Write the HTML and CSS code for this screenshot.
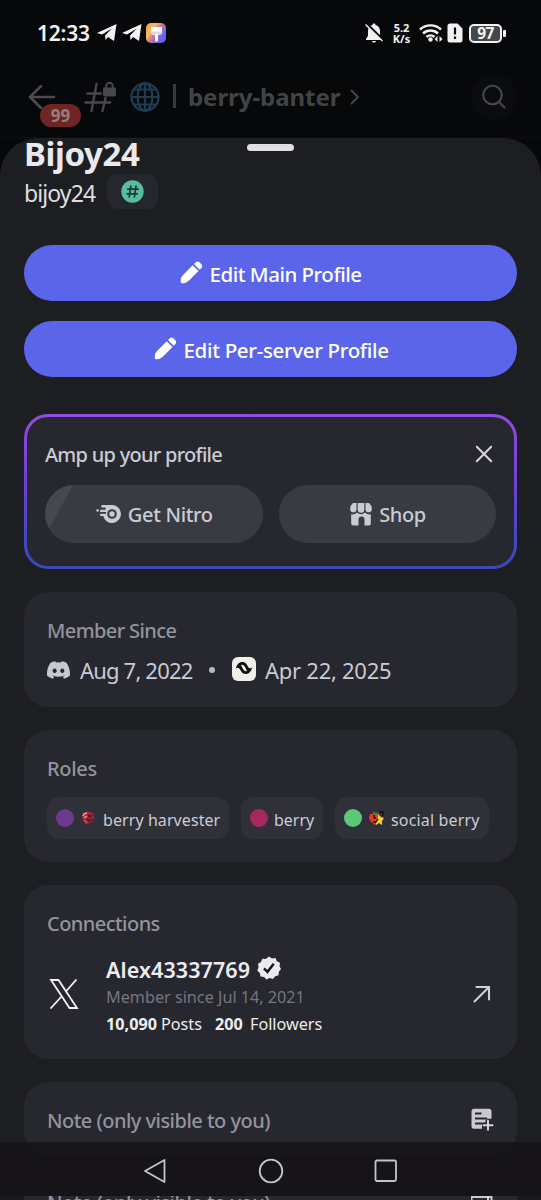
FILE: index.html
```html
<!DOCTYPE html>
<html lang="en">
<head>
<meta charset="utf-8">
<title>Profile</title>
<link rel="stylesheet" href="styles.css">
</head>
<body>
<div class="phone">
  <div class="status">
    <span class="clock">12:33</span>
    <svg class="tg" width="20" height="18" viewBox="0 0 20 18"><path d="M0 9 19.5 0 17 17 11 13 8.500 16 8 11.500 15 4.500 5 10.500Z" fill="#f2f2f4"/></svg>
    <svg class="tg" width="20" height="18" viewBox="0 0 20 18"><path d="M0 9 19.5 0 17 17 11 13 8.500 16 8 11.500 15 4.500 5 10.500Z" fill="#f2f2f4"/></svg>
    <span class="paint"><svg width="20" height="20" viewBox="0 0 20 20"><path d="M5 4h11v7l-4 1v5a1.500 1.500 0 0 1-3 0v-5l-4-1z" fill="#fff"/><path d="M5 8.500h11V11H5z" fill="#ded7ee"/></svg></span>
    <span class="grow"></span>
    <svg class="bell" width="18" height="20" viewBox="0 0 18 20"><path d="M9 .5c1 0 1.500.6 1.500 1.500 3 .8 4.500 3 4.500 6v5l2 3v1H1v-1l2-3V8c0-3 1.500-5.200 4.500-6C7.500 1.100 8 .5 9 .5zM7 18h4c-.4 2-3.600 2-4 0z" fill="#f2f2f4"/><path d="M1.500 1 18 17" stroke="#07080a" stroke-width="3"/><path d="M.5 1.500 17.500 18" stroke="#f2f2f4" stroke-width="1.400"/></svg>
    <span class="speed"><b>5.2</b><b>K/s</b></span>
    <svg class="wifi" width="24" height="20" viewBox="0 0 24 20"><g fill="none" stroke="#f2f2f4" stroke-width="2.400"><path d="M1 6.500a15.500 15.500 0 0 1 21 0"/><path d="M4 10.500a11 11 0 0 1 15 0"/><path d="M7.500 14a6 6 0 0 1 8 0"/></g><circle cx="11.500" cy="16.500" r="2.200" fill="#f2f2f4"/><path d="M18.500 13v6L15.500 16zM20.500 13v6L23.500 16z" fill="#f2f2f4"/></svg>
    <svg class="sim" width="16" height="20" viewBox="0 0 16 20"><path d="M3 .5h7.500l5 5V17a2.500 2.500 0 0 1-2.500 2.500H3A2.500 2.500 0 0 1 .5 17V3A2.500 2.500 0 0 1 3 .5z" fill="#f2f2f4"/><path d="M8 4.500v7M8 13.500v2.500" stroke="#07080a" stroke-width="2.200"/></svg>
    <span class="battery">97</span><span class="tip"></span>
  </div>

  <div class="header">
    <svg class="back" width="28" height="24" viewBox="0 0 28 24"><path d="M13 1 2 12l11 11M2 12h24" fill="none" stroke="#4b4c4f" stroke-width="2.600" stroke-linecap="round" stroke-linejoin="round"/></svg>
    <svg class="hash" width="32" height="32" viewBox="0 0 32 32"><g fill="none" stroke="#47484b" stroke-width="2.400" stroke-linecap="round"><path d="M12.500 3 7.500 30M21.500 17 18.500 30M3.500 12.500H17M1.500 21.500H26"/></g><path d="M20 6.500h11a1 1 0 0 1 1 1v6a2 2 0 0 1-2 2H21a2 2 0 0 1-2-2v-6a1 1 0 0 1 1-1z" fill="#47484b"/><path d="M22.300 7V5a3.200 3.200 0 0 1 6.400 0v2" fill="none" stroke="#47484b" stroke-width="2"/></svg>
    <svg class="globe" width="30" height="30" viewBox="0 0 30 30"><g fill="none" stroke="#1d3d57" stroke-width="2.200"><circle cx="15" cy="15" r="13.600"/><ellipse cx="15" cy="15" rx="7.400" ry="13.600"/><path d="M15 1.500v27M1.500 15h27M4 7.500h22M4 22.500h22"/></g></svg>
    <span class="bar"></span>
    <span class="channel">berry-banter</span>
    <svg class="chev" width="10" height="16" viewBox="0 0 10 16"><path d="m1.500 1.500 6.500 6.500-6.500 6.500" fill="none" stroke="#47484b" stroke-width="1.800" stroke-linecap="round" stroke-linejoin="round"/></svg>
    <span class="grow"></span>
    <span class="search"><svg width="26" height="26" viewBox="0 0 26 26"><g fill="none" stroke="#47484b" stroke-width="2.100" stroke-linecap="round"><circle cx="11.500" cy="11" r="9.300"/><path d="m18 18 5.500 5.500"/></g></svg></span>
    <span class="badge">99</span>
  </div>

  <main class="sheet">
    <span class="handle"></span>
    <h1 class="name">Bijoy24</h1>
    <div class="userline"><span class="user">bijoy24</span><span class="tag"><svg width="23" height="23" viewBox="0 0 23 23"><circle cx="11.500" cy="11.500" r="11.200" fill="#58bd9c"/><path d="M9.800 6 8.200 17M15 6l-1.600 11M6.800 9.200h10.200M6 13.800h10.200" stroke="#1f3834" stroke-width="1.700" stroke-linecap="round"/></svg></span></div>

    <button class="primary"><svg width="23" height="23" viewBox="0 0 23 23"><path d="M12.700 4.300 18.500 10.100 9 19.500Q6 22.300 2.500 22.300H2Q.6 22.300.8 20.500V19q0-2.500 2-4.700zM14 3.100l1.800-1.800q1.800-1.500 3.600 0l2 2q1.500 1.800 0 3.600l-1.700 1.800z" fill="#fff"/></svg><span class="t-main">Edit Main Profile</span></button>
    <button class="primary"><svg width="23" height="23" viewBox="0 0 23 23"><path d="M12.700 4.300 18.500 10.100 9 19.500Q6 22.300 2.500 22.300H2Q.6 22.300.8 20.500V19q0-2.500 2-4.700zM14 3.100l1.800-1.800q1.800-1.500 3.600 0l2 2q1.500 1.800 0 3.600l-1.700 1.800z" fill="#fff"/></svg><span class="t-server">Edit Per-server Profile</span></button>

    <section class="amp">
      <div class="amp-head"><span class="t-amp">Amp up your profile</span><svg width="18" height="18" viewBox="0 0 18 18"><path d="m1.800 1.800 14.400 14.400M16.200 1.800 1.800 16.200" stroke="#d6d6dc" stroke-width="2" stroke-linecap="round"/></svg></div>
      <div class="amp-row">
        <button class="secondary shine"><svg width="25" height="20" viewBox="0 0 25 20"><path d="M6.500 1H16a9 9 0 1 1-8.800 11H5a1.100 1.100 0 0 1 0-2.200h5V8H5a1.100 1.100 0 0 1 0-2.200h4.500V3.600h-3a1.300 1.300 0 0 1 0-2.600z" fill="#cbcbd3"/><circle cx="16" cy="10" r="4.800" fill="#393b43"/><circle cx="16" cy="10" r="2.700" fill="#cbcbd3"/><circle cx="1.600" cy="6.500" r="1.300" fill="#cbcbd3"/></svg><span class="t-nitro">Get Nitro</span></button>
        <button class="secondary"><svg width="22" height="23" viewBox="0 0 22 23"><g fill="#cbcbd3"><path d="M3 0h3.500v6.200a3 3 0 0 1-6.300 0Q0 2.500 3 0zM7.700 0h6.600v6.500a3.300 3.300 0 0 1-6.600 0zM15.500 0H19q3 2.500 2.800 6.200a3 3 0 0 1-6.300 0z"/><path d="M1.200 11.300q3.500.6 5.800-1.800 4 3.600 8 0 2.300 2.400 5.800 1.800V20.500a2 2 0 0 1-2 2h-4.300v-6a3 3 0 0 0-6 0v6H3.200a2 2 0 0 1-2-2z"/></g></svg><span class="t-shop">Shop</span></button>
      </div>
    </section>

    <section class="card member">
      <h2 class="t-member">Member Since</h2>
      <div class="dates">
        <svg width="23" height="18" viewBox="0 0 127.140 96.360"><path fill="#c8c8d0" d="M107.700 8.070A105.150 105.150 0 0 0 81.470 0a72.060 72.060 0 0 0-3.360 6.830 97.680 97.680 0 0 0-29.110 0A72.370 72.370 0 0 0 45.640 0a105.890 105.890 0 0 0-26.250 8.090C2.790 32.650-1.710 56.600.54 80.210a105.730 105.730 0 0 0 32.170 16.150 77.700 77.700 0 0 0 6.890-11.110 68.420 68.420 0 0 1-10.850-5.180c.91-.66 1.800-1.340 2.660-2a75.570 75.570 0 0 0 64.320 0c.87.71 1.760 1.390 2.660 2a68.680 68.680 0 0 1-10.870 5.190 77 77 0 0 0 6.890 11.100 105.250 105.250 0 0 0 32.190-16.140c2.640-27.380-4.510-51.110-18.900-72.150zM42.450 65.690C36.180 65.690 31 60 31 53s5-12.740 11.430-12.740S54 46 53.890 53s-5.050 12.690-11.440 12.690zm42.240 0C78.410 65.690 73.250 60 73.250 53s5-12.740 11.440-12.740S96.230 46 96.120 53s-5.040 12.690-11.430 12.690z"/></svg>
        <span class="t-aug">Aug 7, 2022</span><span class="dot"></span>
        <span class="server"><svg width="18" height="14" viewBox="0 0 18 14"><path d="M.8 7.500C2 3 4.500 1 7 1c3.500 0 4.500 2 5.800 4.200C14 7.500 15.500 7.800 17.200 6.500 16 11 13.500 13 11 13c-3.500 0-4.500-2-5.800-4.200C4 6.500 2.500 6.200.8 7.500z" fill="#121212"/><path d="M7 3.800c1.500 0 2.300 1 3 2.200l1.700 3.200c.4.700 0 1-.7 1-1.500 0-2.300-1-3-2.200L6.300 4.800c-.4-.7 0-1 .7-1z" fill="#f1efea"/></svg></span>
        <span class="t-apr">Apr 22, 2025</span>
      </div>
    </section>

    <section class="card roles">
      <h2 class="t-roles">Roles</h2>
      <div class="chips">
        <span class="chip c1"><i class="violet"></i><svg width="14" height="14" viewBox="0 0 14 14"><path d="M2 2Q7-1 12 2q3 4-1 8-3 4-6 3Q-1 8 2 2z" fill="#9d2638"/><path d="M2 5q1-3 4-3M3 7l3-2" fill="none" stroke="#dfa0a8" stroke-width="1.500"/><path d="m7 4 2 2 2-2M6 8l2 2 3-2" stroke="#421821" stroke-width="1.500" fill="none"/><path d="M3 9l3 3" stroke="#d54455" stroke-width="1.500"/></svg><span class="t-harv">berry harvester</span></span>
        <span class="chip c2"><i class="pink"></i><span class="t-berry">berry</span></span>
        <span class="chip c3"><i class="green"></i><svg width="15" height="15" viewBox="0 0 15 15"><path d="M1 3h9v9l-4 2-4-3-2-4z" fill="#df3c32"/><path d="M9 3 12 6l3 1-2 3v4l-3-2-3 2V10l2-2z" fill="#f3ce38"/><path d="m4 0 3 2 3-1-2 3H4z" fill="#42813b"/><path d="M10 1h4v4M5 4v3h2M4 11h3l2-3" stroke="#180e0e" stroke-width="1.300" fill="none"/></svg><span class="t-social">social berry</span></span>
      </div>
    </section>

    <section class="card conns">
      <h2 class="t-conn">Connections</h2>
      <div class="conn">
        <svg class="x" width="30" height="30" viewBox="0 0 30 30"><g fill="none" stroke="#f2f2f4" stroke-width="1.800"><path d="M2 1h7.500L28 29h-7.500zM27.500.5 16.500 13M13 17 1.500 29.500"/></g></svg>
        <div class="info">
          <div class="handle-row"><span class="t-alex">Alex43337769</span><svg width="24" height="24" viewBox="0 0 24 24"><path d="m12 .5 3 2 3.500-.5 1.300 3.300 3.200 1.500-.5 3.500L24 13l-2.200 2.800-.2 3.500-3.400.9-2.200 2.800-3.400-.9L9.500 23.500 7 21l-3.500-.5-.7-3.400L.3 14.500l1.300-3.200-.6-3.500L4 6l1.300-3.300 3.500.3z" fill="#ebebef"/><path d="m7 12.500 3.500 3.300 6.200-8" fill="none" stroke="#17171b" stroke-width="2.500"/></svg></div>
          <div class="since"><span class="t-since">Member since Jul 14, 2021</span></div>
          <div class="stats"><b class="t-n1">10,090</b><span class="t-posts">Posts</span><b class="t-n2">200</b><span class="t-fol">Followers</span></div>
        </div>
        <svg class="go" width="18" height="18" viewBox="0 0 18 18"><path d="M3.500 2H16v12.500M16 2 1.500 16.500" fill="none" stroke="#d0d0d7" stroke-width="2.100" stroke-linecap="round"/></svg>
      </div>
    </section>

    <section class="card note">
      <h2 class="t-note">Note (only visible to you)</h2>
      <svg width="23" height="23" viewBox="0 0 23 23"><path d="M3 .8h15a2.500 2.500 0 0 1 2.500 2.500v7.500h-5v4H11v6H3A2.500 2.500 0 0 1 .5 18.300v-15A2.500 2.500 0 0 1 3 .8z" fill="#c9c8d3"/><path d="M4 5.500h6.500M4 10.500h12M4 15.500h7" stroke="#27272f" stroke-width="2"/><path d="M17 12v10M12 17h10" stroke="#27272f" stroke-width="5"/><path d="M17 12.700v9M12.500 17.200h9" stroke="#d5d4de" stroke-width="2" stroke-linecap="round"/></svg>
    </section>
  </main>

  <nav class="nav">
    <div class="keys">
      <svg width="24" height="26" viewBox="0 0 24 26"><path d="M21.500 2v22L2 13z" fill="none" stroke="#c5c4c8" stroke-width="1.800" stroke-linejoin="round"/></svg>
      <svg width="26" height="26" viewBox="0 0 26 26"><circle cx="13" cy="13" r="11.300" fill="none" stroke="#c5c4c8" stroke-width="1.800"/></svg>
      <svg width="24" height="24" viewBox="0 0 24 24"><rect x="1.500" y="1.500" width="20.500" height="20.500" rx="1.500" fill="none" stroke="#c5c4c8" stroke-width="1.800"/></svg>
    </div>
    <div class="echo"><div class="echo-card"><span class="t-note">Note (only visible to you)</span><svg width="23" height="23" viewBox="0 0 23 23"><path d="M.5 6V1h20v5" fill="none" stroke="#c9c8d3" stroke-width="2"/><path d="M17 0v5" stroke="#d5d4de" stroke-width="2"/></svg></div></div>
  </nav>
</div>
</body>
</html>
```
FILE: styles.css
```css
* { box-sizing: border-box; }
body { margin: 0; background: #07080a; font-family: "Noto Sans", "Open Sans", sans-serif; color: #cbcbd3; }
h1, h2 { margin: 0; }
svg { flex: none; display: block; }
span, b { white-space: nowrap; }
button { border: 0; padding: 0; font: inherit; color: inherit; }
.phone { position: relative; width: 541px; height: 1200px; overflow: hidden; display: flex; flex-direction: column; }
.grow { flex: 1; }

.status { height: 66px; flex: none; display: flex; align-items: center; padding: 0 35px 0 37px; color: #f2f2f4; }
.clock { width: 60px; font-size: 21px; font-weight: 600; letter-spacing: -.2px; }
.tg { margin-right: 5px; }
.tg + .tg { margin-right: 4px; }
.paint { width: 20px; height: 20px; border-radius: 5px; background: linear-gradient(125deg, #f5a052 10%, #f4bd62 30%, #d27199 50%, #626bef 75%, #6f50d8); }
.bell { margin: 0 8px 0 -1px; }
.speed { width: 21px; margin-right: 7px; display: flex; flex-direction: column; align-items: center; font-size: 11px; line-height: 11px; }
.wifi { margin-right: 4px; }
.sim { margin-right: 6px; }
.battery { width: 33px; height: 19px; border: 2px solid #f2f2f4; border-radius: 5px; background: #46474a; font-size: 15.5px; font-weight: 700; line-height: 15px; text-align: center; letter-spacing: -.5px; }
.tip { width: 3px; height: 7px; margin-left: 1px; border-radius: 1px; background: #f2f2f4; }

.header { position: relative; height: 72px; flex: none; display: flex; align-items: center; padding: 0 24px 10px 28px; border-bottom: 1px solid #0c0d0f; }
.back { margin-right: 28px; }
.hash { margin-right: 14px; }
.globe { margin-right: 13px; }
.bar { width: 3px; height: 24px; margin: -2px 12px 0 0; background: #38393c; }
.channel { width: 162px; margin-top: 1px; font-size: 24px; font-weight: 700; line-height: 30px; color: #424346; letter-spacing: -.05px; }
.search { width: 46px; height: 46px; border-radius: 50%; background: #0b0c0e; display: flex; align-items: center; justify-content: center; }
.badge { position: absolute; left: 40px; top: 38px; width: 41px; height: 23px; border-radius: 12px; background: #6e2524; color: #8f8080; font-size: 17px; font-weight: 700; line-height: 23px; text-align: center; }

.sheet { position: relative; flex: none; height: 1062px; background: #1d1e22; border-radius: 38px 38px 0 0; padding: 0 24px; display: flex; flex-direction: column; }
.handle { position: absolute; left: 247px; top: 6px; width: 47px; height: 7px; border-radius: 4px; background: #dfdfe4; }
.name { height: 34px; line-height: 31px; font-size: 33px; font-weight: 700; color: #e9e9ee; letter-spacing: -.4px; }
.userline { height: 42px; display: flex; align-items: center; margin-bottom: 31px; }
.user { width: 83px; font-size: 23px; line-height: 30px; color: #dedee3; letter-spacing: -.9px; }
.tag { width: 51px; height: 35px; border-radius: 11px; background: #26272e; display: flex; align-items: center; justify-content: center; margin-top: -4px; }
.primary { flex: none; height: 56px; border-radius: 28px; background: #5b65e9; color: #fff; display: flex; align-items: center; justify-content: center; gap: 7px; font-size: 20.5px; font-weight: 500; line-height: 28px; margin-bottom: 20px; }
.primary svg { margin-top: -1px; }
.primary span { margin-top: 1px; text-align: left; }
.t-main { width: 152px; letter-spacing: -.5px; }
.t-server { width: 204px; letter-spacing: -.33px; }

.amp { flex: none; height: 155px; margin-top: 17px; border: 3px solid transparent; border-radius: 24px; background: linear-gradient(#27272f, #27272f) padding-box, linear-gradient(#904ee0, #783fdc 35%, #4a45cc 75%, #3948b7) border-box; padding: 23px 18px 0; }
.amp-head { display: flex; justify-content: space-between; align-items: center; height: 30px; padding-right: 3px; font-size: 20px; font-weight: 500; line-height: 30px; margin-bottom: 15px; }
.amp-head svg { margin-top: -3px; }
.t-amp { letter-spacing: -.73px; }
.amp-row { display: flex; gap: 16px; }
.secondary { flex: 1; height: 58px; border-radius: 29px; background: #393b43; display: flex; align-items: center; justify-content: center; gap: 7px; font-size: 20px; font-weight: 500; line-height: 28px; }
.secondary span { margin-top: 2px; text-align: left; }
.shine { background: linear-gradient(119deg, #454850 0 24px, #393b43 25px); }
.t-nitro { width: 84px; letter-spacing: -.3px; }
.t-shop { width: 45px; letter-spacing: -.4px; }

.card { flex: none; border-radius: 24px; background: #27272f; padding: 24px 23px 0; }
h2 { font-size: 20px; font-weight: 500; line-height: 30px; color: #93939d; white-space: nowrap; }
.t-member { letter-spacing: -.6px; }
.t-roles { letter-spacing: -.3px; }
.t-conn { letter-spacing: -.55px; }
.t-note { letter-spacing: -.52px; }
.member { height: 115px; margin-top: 23px; }
.dates { display: flex; align-items: center; height: 30px; margin-top: 9px; font-size: 22px; line-height: 30px; }
.dates svg { margin-top: -1px; }
.t-aug { width: 113px; margin-left: 10px; letter-spacing: -.82px; }
.dot { width: 6px; height: 6px; border-radius: 50%; background: #b9b9c2; margin: 0 17px 0 16px; }
.server { width: 24px; height: 24px; border-radius: 6px; background: #f1efea; display: flex; align-items: center; justify-content: center; margin: -3px 9px 0 0; }
.t-apr { letter-spacing: -.27px; }

.roles { height: 132px; margin-top: 23px; }
.chips { display: flex; gap: 12px; margin-top: 13px; }
.chip { height: 42px; border-radius: 12px; background: #2f3038; display: flex; align-items: center; font-size: 16px; line-height: 24px; padding-left: 9px; }
.chip i { width: 18px; height: 18px; border-radius: 50%; flex: none; }
.chip svg { margin-left: 7px; }
.chip > span { margin: 4px 0 0 6px; }
.violet { background: #6e3a8c; }
.pink { background: #a52860; }
.green { background: #5cc878; }
.c1 { width: 182px; }
.c2 { width: 82px; }
.c3 { width: 154px; }
.chip .t-harv { margin-left: 8px; letter-spacing: .08px; }
.chip .t-social { margin-left: 7px; letter-spacing: .15px; }

.conns { height: 174px; margin-top: 23px; }
.conn { display: flex; align-items: center; height: 84px; margin-top: 14px; }
.x { margin: -3px 27px 0 2px; }
.info { flex: 1; }
.handle-row { display: flex; align-items: center; height: 31px; font-size: 21.5px; font-weight: 600; line-height: 31px; color: #ededf1; }
.handle-row svg { margin-top: -3px; }
.t-alex { width: 151px; letter-spacing: .08px; }
.since { height: 25px; font-size: 16.2px; line-height: 24px; color: #767680; }
.stats { display: flex; height: 27px; font-size: 16.2px; line-height: 28px; color: #ededf1; }
.t-n1 { width: 55px; }
.t-posts { width: 54px; }
.t-n2 { width: 35px; }
.go { margin: -2px 3px 0 0; }

.note { height: 73px; margin-top: 23px; display: flex; justify-content: space-between; }
.note svg { margin-top: 2px; }

.nav { position: absolute; left: 0; right: 0; bottom: 0; height: 58px; background: rgba(22, 20, 23, .87); display: flex; flex-direction: column; }
.keys { height: 54px; display: flex; align-items: center; justify-content: space-between; padding: 3px 143px 0 143px; }
.echo { height: 4px; overflow: hidden; background: #19191e; padding: 0 24px; }
.echo-card { height: 73px; background: #27272f; padding: 0 23px; display: flex; justify-content: space-between; }
.echo-card .t-note { font-size: 20px; font-weight: 500; line-height: 30px; margin-top: -8px; color: #93939d; }
```
